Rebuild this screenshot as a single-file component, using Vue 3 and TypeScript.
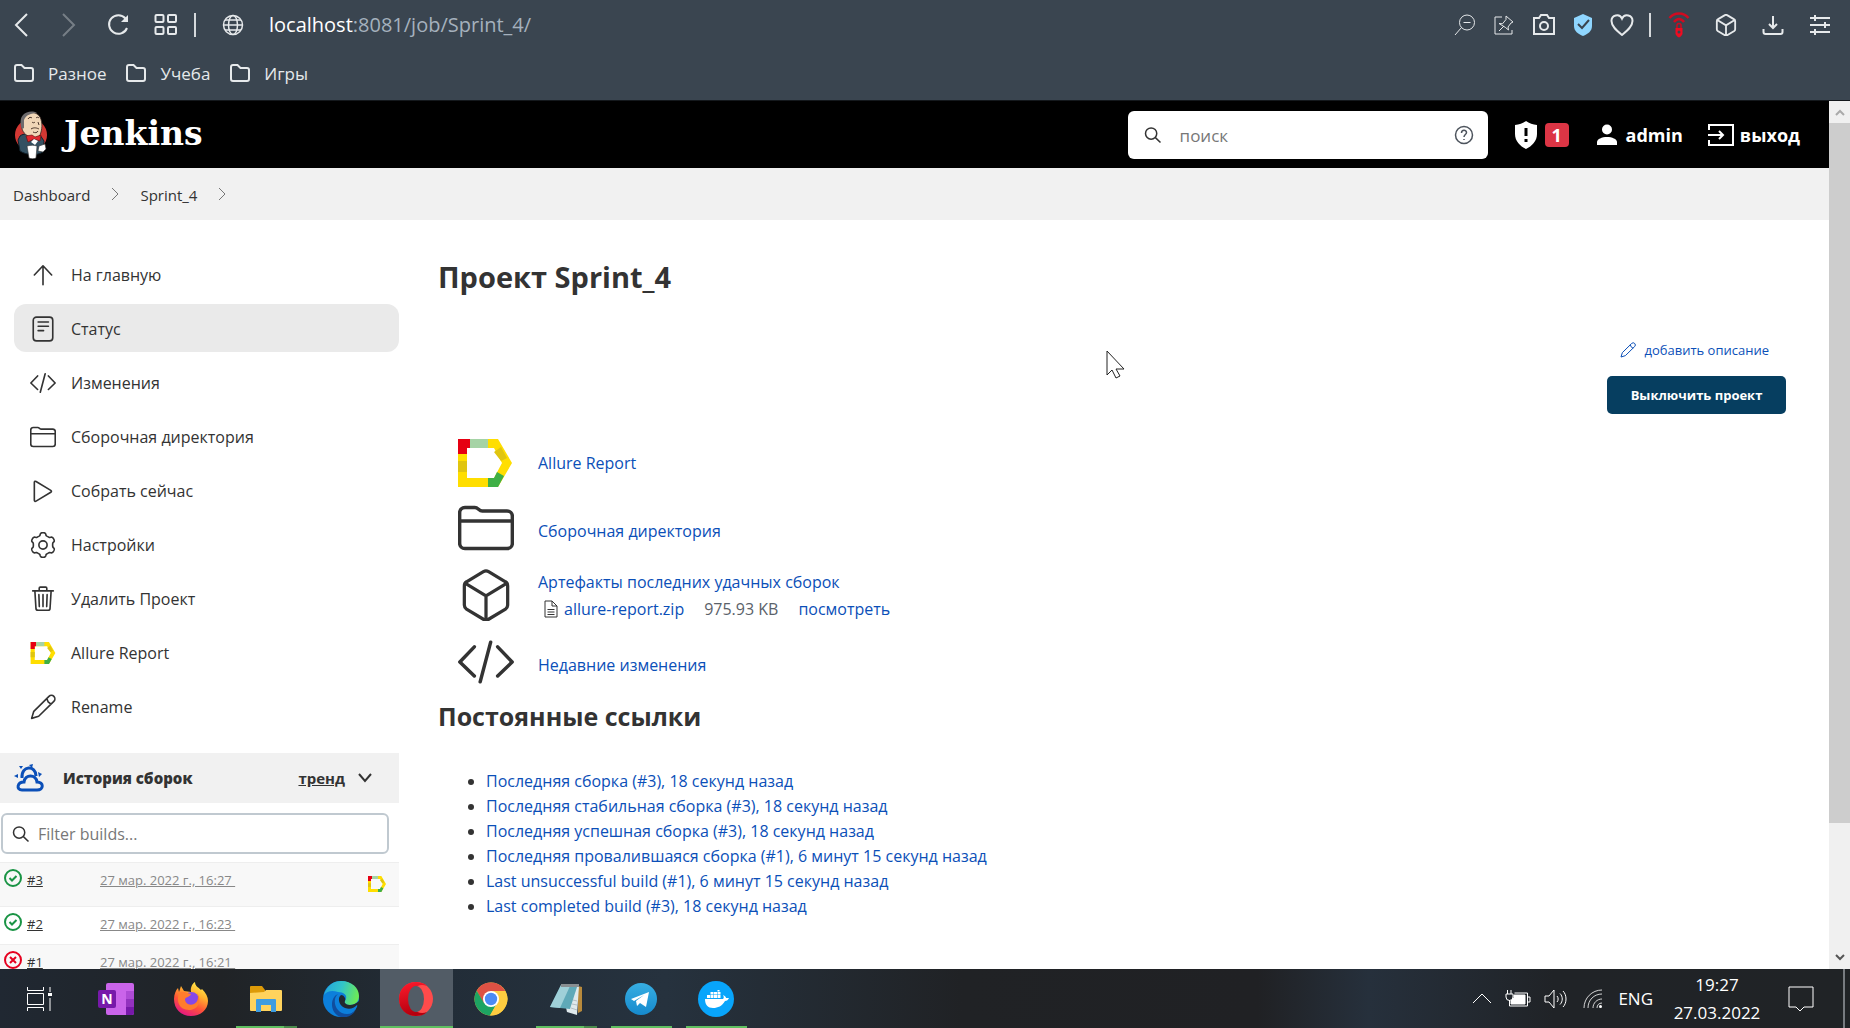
<script setup lang="ts">
import { ref } from 'vue'

interface Task { icon: string; label: string; active?: boolean }
interface Build { id: string; date: string; ok: boolean; report?: boolean }
interface App { name: string; state?: 'open' | 'multi' | 'focus' }

const search = ref('')
const filter = ref('')

// Six-lobed gear outline around (12, 12)
function gearOutline(): string {
  const points: string[] = []
  for (let i = 0; i < 120; i++) {
    const angle = (i / 120) * Math.PI * 2
    const wave = Math.cos(angle * 6)
    const radius = 10.1 + 1.2 * (wave / (0.3 + Math.abs(wave))) * 1.3
    points.push(`${(12 + radius * Math.sin(angle)).toFixed(2)} ${(12 - radius * Math.cos(angle)).toFixed(2)}`)
  }
  return `M${points.join('L')}Z`
}

const strokes: Record<string, string> = {
  up: 'M12 21V4M4 12l8-8.500 8 8.500',
  status: 'M6 1h12a3 3 0 0 1 3 3v16a3 3 0 0 1-3 3H6a3 3 0 0 1-3-3V4a3 3 0 0 1 3-3zM7.500 5.500h9.500M7.500 9.500h9.500M7.500 13.500h5',
  code: 'M7 5.500L.8 12 7 18M17 5.500l6.200 6.500L17 18M14 3.500l-4.500 17',
  folder: 'M.7 5.500A2.300 2.300 0 0 1 3 3.200h4.200c1.500 0 1.700 1.500 3.200 1.500H21A2.300 2.300 0 0 1 23.300 7v11.500a2.300 2.300 0 0 1-2.300 2.300H3a2.300 2.300 0 0 1-2.300-2.300zM.7 9h22.600',
  play: 'M4 4v16.500c0 1 .8 1.300 1.600.8l13.600-8.200c.8-.5.8-1.200 0-1.700L5.600 3.200C4.800 2.700 4 3 4 4z',
  gear: gearOutline() + 'M15.800 12a3.800 3.800 0 1 1-7.600 0 3.800 3.800 0 0 1 7.600 0z',
  trash: 'M2.500 4.500h19M4.500 4.500l1 16.200a1.800 1.800 0 0 0 1.800 1.700h9.400a1.800 1.800 0 0 0 1.800-1.700l1-16.200M8.500 4.500V2a1 1 0 0 1 1-1h5a1 1 0 0 1 1 1v2.500M12 8v11M8.200 8l.4 11M15.800 8l-.4 11',
  pencil: 'M1.500 22.500l2-6.500L17.500 2.200a3.200 3.200 0 0 1 4.500 4.600L8 20.500zM15.500 4.200l1.200 3 1.500 1.300 1.800.3',
  search: 'M17 10a7.500 7.500 0 1 1-15 0 7.500 7.500 0 0 1 15 0zM15.200 15.500L22 22',
  cube: 'M2 7.800c0-.9.3-1.500 1-1.900l7.800-4.700a2.300 2.300 0 0 1 2.400 0L21 5.900c.7.4 1 1 1 1.900v8.800c0 .8-.4 1.500-1 1.900l-7.800 4.700c-.7.4-1.700.4-2.400 0L3 18.500c-.6-.4-1-1.100-1-1.900zM2.500 6.600L12 12.400l9.500-5.800M12 12.400v11'
}

const tasks: Task[] = [
  { icon: 'up', label: 'На главную' },
  { icon: 'status', label: 'Статус', active: true },
  { icon: 'code', label: 'Изменения' },
  { icon: 'folder', label: 'Сборочная директория' },
  { icon: 'play', label: 'Собрать сейчас' },
  { icon: 'gear', label: 'Настройки' },
  { icon: 'trash', label: 'Удалить Проект' },
  { icon: 'allure', label: 'Allure Report' },
  { icon: 'pencil', label: 'Rename' }
]

const builds: Build[] = [
  { id: '#3', date: '27 мар. 2022 г., 16:27', ok: true, report: true },
  { id: '#2', date: '27 мар. 2022 г., 16:23', ok: true },
  { id: '#1', date: '27 мар. 2022 г., 16:21', ok: false }
]

const permalinks: string[] = [
  'Последняя сборка (#3), 18 секунд назад',
  'Последняя стабильная сборка (#3), 18 секунд назад',
  'Последняя успешная сборка (#3), 18 секунд назад',
  'Последняя провалившаяся сборка (#1), 6 минут 15 секунд назад',
  'Last unsuccessful build (#1), 6 минут 15 секунд назад',
  'Last completed build (#3), 18 секунд назад'
]

const bookmarks: string[] = ['Разное', 'Учеба', 'Игры']

const apps: App[] = [
  { name: 'taskview' }, { name: 'onenote' }, { name: 'firefox' },
  { name: 'explorer', state: 'multi' }, { name: 'edge' }, { name: 'opera', state: 'focus' },
  { name: 'chrome' }, { name: 'notepad', state: 'multi' },
  { name: 'telegram', state: 'open' }, { name: 'docker', state: 'open' }
]
</script>

<template>
  <div class="screen">
    <svg class="defs" width="0" height="0" aria-hidden="true">
      <defs>
        <symbol id="allure" viewBox="0 0 54 48">
          <g stroke="none">
            <path fill="#ffde00" d="M0 0h40l14 24-14 24H0V0zm9 9v30h27l8-15-8-15z" fill-rule="evenodd" />
            <path fill="#e60012" d="M0 0h12v9H9v6H0z" />
            <path fill="#a5d3a5" d="M12 0h18v9H12z" />
            <path fill="#e0c510" d="M0 22h9v11H0zM36 13l7-5 6 11-6 3z" />
            <path fill="#3faf46" d="M30 39h6l3-6 7 4-6 11H30z" />
          </g>
        </symbol>
      </defs>
    </svg>

    <div class="browser">
      <div class="toolbar">
        <div class="nav">
          <button class="ib" aria-label="Назад"><svg width="14" height="24" viewBox="0 0 14 24"><path d="M13 1L2 12l11 11" /></svg></button>
          <button class="ib dim" aria-label="Вперёд"><svg width="14" height="24" viewBox="0 0 14 24"><path d="M1 1l11 11L1 23" /></svg></button>
          <button class="ib" aria-label="Обновить"><svg width="22" height="22" viewBox="0 0 22 22"><path d="M18.500 4.500A9.300 9.300 0 1 0 20 14" /><path d="M21 1v7h-7z" fill="#e6e9eb" stroke="none" /></svg></button>
          <button class="ib" aria-label="Вкладки"><svg width="24" height="22" viewBox="0 0 24 22"><rect x="1.500" y="1" width="8" height="7" rx="1" /><rect x="14" y="1" width="8" height="7" rx="1" /><rect x="1.500" y="13" width="8" height="7" rx="1" /><rect x="14" y="13" width="8" height="7" rx="1" /></svg></button>
          <span class="sep"></span>
          <svg class="globe" width="22" height="22" viewBox="0 0 22 22"><circle cx="11" cy="11" r="9.500" /><ellipse cx="11" cy="11" rx="4.500" ry="9.500" /><path d="M1.500 11h19M3 6h16M3 16h16" /></svg>
          <span class="url"><b>localhost</b>:8081/job/Sprint_4/</span>
        </div>
        <div class="tools">
          <svg width="22" height="22" viewBox="0 0 22 22"><circle cx="13" cy="8.500" r="7.500" /><path d="M7.500 13.500L1 21M9.500 8.500h7" /></svg>
          <svg width="22" height="22" viewBox="0 0 22 22"><path d="M9 3H2v17h17v-4M13 2l7 6-2 1-3 4 .5 3-3-2.500L6 9.500l3.500.3L13 5.500zM11 12l-5 5" /></svg>
          <svg width="24" height="22" viewBox="0 0 24 22"><path d="M2 4h5l2-3h6l2 3h5v16H2z" /><circle cx="12" cy="12" r="4" /></svg>
          <svg width="20" height="24" viewBox="0 0 20 24"><path d="M10 1l9 4v8c0 5-4 8-9 10-5-2-9-5-9-10V5z" fill="#8fd6ff" stroke="none" /><path d="M5 11l4 4 7-8" stroke="#3a4550" stroke-width="2" /></svg>
          <svg width="24" height="22" viewBox="0 0 24 22"><path d="M12 21C7 17 1.500 12.500 1.500 7a5.500 5.500 0 0 1 10.500-2.500A5.500 5.500 0 0 1 22.500 7c0 5.500-5.500 10-10.500 14z" /></svg>
          <span class="sep"></span>
          <svg class="vpn" width="22" height="26" viewBox="0 0 22 26"><path d="M1.500 6c5-6 14-6 19 0M6 10c3-4 7-4 10 0" stroke="#d00b20" stroke-width="2.500" /><path d="M9 16v-2.500a2 2 0 0 1 4 0V16" stroke="#d00b20" stroke-width="1.500" /><path d="M7.500 16h7v6c-1 2-2 3-3.500 3.500-1.500-.5-2.500-1.500-3.500-3.500z" fill="#f00b20" stroke="none" /><circle cx="11" cy="20" r="1.500" fill="#3a4550" stroke="none" /></svg>
          <svg class="wide" width="22" height="22" viewBox="0 0 24 24"><path :d="strokes.cube" /></svg>
          <svg class="wide" width="22" height="22" viewBox="0 0 22 22"><path d="M11 2v12M7 10l4 4 4-4M1.500 15v3a2 2 0 0 0 2 2h15a2 2 0 0 0 2-2v-3" /></svg>
          <svg class="wide" width="22" height="22" viewBox="0 0 22 22"><path d="M1 4h20M1 11h20M1 18h20M6 1v6M16 8v6M6 15v6" /></svg>
        </div>
      </div>
      <nav class="bookmarks">
        <a v-for="name in bookmarks" :key="name" href="#">
          <svg width="20" height="18" viewBox="0 0 20 18"><path d="M1 3a2 2 0 0 1 2-2h4.500l3 3H17a2 2 0 0 1 2 2v9a2 2 0 0 1-2 2H3a2 2 0 0 1-2-2z" /></svg>{{ name }}
        </a>
      </nav>
    </div>

    <div class="viewport">
      <div class="page">
        <header class="header">
          <a class="brand" href="#">
            <svg width="34" height="48" viewBox="0 0 34 48">
              <circle cx="17" cy="24" r="16" fill="#d33833" />
              <path d="M6 25c4-3 8-2 12 0l8-1 4 6-1 11c-7 4-17 3-23-1L4 29z" fill="#335061" stroke="#10202a" />
              <path d="M8 7c3-6 14-8 18-1 3 6 2 13 0 18-3 4-8 4-12 1C8 22 6 15 8 7z" fill="#f0d6b7" stroke="#3a2a25" stroke-width=".8" />
              <path d="M9 4c-3 3-3 9-1 14l2-1V9c2-5 7-7 13-7C18-1 12 1 9 4z" fill="#6d6b6d" />
              <path d="M14 8c1-2 3-2 4-1M22 7c1-1 2-1 3 0M18 11c1 1 2 1 3 0M24 11l1 3M17 18c3-2 6-1 8 0M19 21c2 1 4 1 5-1" fill="none" stroke="#49352a" />
              <path d="M18 24l-6 1 2 6 6-3 6 2 1-6-6 2z" fill="#e0282e" stroke="#70110e" stroke-width=".7" />
              <path d="M17 31l3-3 4 2-3 4z" fill="#fff" />
              <path d="M13 35c4-1 7-1 10 0l-1 12c-2 1-5 1-7 0z" fill="#fff" stroke="#333" stroke-width=".6" />
              <path d="M25 35l6-2 1 5-3 3-5-1z" fill="#fff" stroke="#333" stroke-width=".6" />
            </svg>
            <span>Jenkins</span>
          </a>
          <div class="account">
            <label class="search">
              <svg width="18" height="18" viewBox="0 0 24 24"><path :d="strokes.search" /></svg>
              <input v-model="search" type="text" placeholder="поиск" aria-label="поиск" />
              <svg width="20" height="20" viewBox="0 0 20 20"><circle cx="10" cy="10" r="8.500" /><path d="M7.500 8c0-3.500 5-3.500 5-.5C12.500 9.500 10 9.500 10 12M10 14v1" /></svg>
            </label>
            <a class="alerts" href="#">
              <svg width="24" height="28" viewBox="0 0 24 28"><path d="M12 0c3 2.500 7 3.500 11 4v9c0 7-5 12-11 15C6 25 1 20 1 13V4c4-.5 8-1.500 11-4z" fill="#fff" /><path d="M12 7v8M12 18v3" stroke="#000" stroke-width="3" /></svg>
              <span class="badge">1</span>
            </a>
            <a class="user" href="#"><svg width="20" height="22" viewBox="0 0 20 22"><circle cx="10" cy="5.500" r="5" fill="#fff" /><path d="M0 21v-3c0-3 5-5 10-5s10 2 10 5v3z" fill="#fff" /></svg>admin</a>
            <a class="logout" href="#"><svg width="28" height="24" viewBox="0 0 28 24"><path d="M2 7V2h24v20H2v-5M1 12h15M12 8l4 4-4 4" fill="none" stroke="#fff" stroke-width="2" /></svg>выход</a>
          </div>
        </header>

        <nav class="crumbs">
          <a href="#">Dashboard</a>
          <svg width="8" height="14" viewBox="0 0 8 14"><path d="M1 1l6 6-6 6" /></svg>
          <a href="#">Sprint_4</a>
          <svg width="8" height="14" viewBox="0 0 8 14"><path d="M1 1l6 6-6 6" /></svg>
        </nav>

        <div class="body">
          <aside class="side">
            <nav class="tasks">
              <a v-for="task in tasks" :key="task.label" href="#" :class="{ active: task.active }">
                <svg v-if="task.icon === 'allure'" width="26" height="22"><use href="#allure" /></svg>
                <svg v-else width="26" height="26" viewBox="0 0 24 24"><path :d="strokes[task.icon]" /></svg>
                {{ task.label }}
              </a>
            </nav>
            <div class="history">
              <svg class="weather" width="30" height="30" viewBox="0 0 30 30">
                <path d="M8 27h15c7 0 7-8 0-8-1-8-12-8-13 0-7 0-8 8-2 8z" fill="none" stroke="#0b4fb8" stroke-width="3" />
                <path d="M8 15c-1-13 14-13 14-2" fill="none" stroke="#0b4fb8" stroke-width="3" />
                <path d="M0 13l4-2v4zM5 3l4 0-2 3zM15 2l4-1-1 4zM24 9l4 2-3 3z" fill="#0b4fb8" />
              </svg>
              <strong>История сборок</strong>
              <a href="#">тренд</a>
              <svg width="14" height="10" viewBox="0 0 14 10"><path d="M1 1l6 7 6-7" fill="none" stroke="#333" stroke-width="2" /></svg>
            </div>
            <label class="filter">
              <svg width="18" height="18" viewBox="0 0 24 24"><path :d="strokes.search" /></svg>
              <input v-model="filter" type="text" placeholder="Filter builds..." aria-label="Filter builds..." />
            </label>
            <table class="builds">
              <tbody>
                <tr v-for="build in builds" :key="build.id" :class="{ tall: build.report }">
                  <td class="num">
                    <svg width="18" height="18" viewBox="0 0 18 18" :class="build.ok ? 'ok' : 'bad'">
                      <circle cx="9" cy="9" r="8" />
                      <path v-if="build.ok" d="M5.500 9l2.500 2.500L12.500 7" />
                      <path v-else d="M6 6l6 6M12 6l-6 6" />
                    </svg>
                    <a href="#">{{ build.id }}</a>
                  </td>
                  <td class="when"><a href="#">{{ build.date }}&nbsp;</a></td>
                  <td class="report"><a v-if="build.report" href="#" aria-label="Allure Report"><svg width="18" height="16"><use href="#allure" /></svg></a></td>
                </tr>
              </tbody>
            </table>
          </aside>

          <main class="main">
            <h1>Проект Sprint_4</h1>
            <div class="actions">
              <a href="#"><svg width="16" height="18" viewBox="0 0 24 24"><path :d="strokes.pencil" /></svg>добавить описание</a>
              <button type="button">Выключить проект</button>
            </div>
            <div class="links">
              <div class="entry report-entry">
                <svg width="54" height="48"><use href="#allure" /></svg>
                <a href="#">Allure Report</a>
              </div>
              <div class="entry">
                <svg width="56" height="56" viewBox="0 0 24 24"><path :d="strokes.folder" /></svg>
                <a class="label" href="#">Сборочная директория</a>
              </div>
              <div class="entry">
                <svg width="56" height="52" viewBox="0 0 24 24"><path :d="strokes.cube" /></svg>
                <div class="artifacts">
                  <a href="#">Артефакты последних удачных сборок</a>
                  <div class="file">
                    <svg width="14" height="18" viewBox="0 0 14 18"><path d="M1 1h7l5 5v11H1zM8 1v5h5M3.500 9.500h7M3.500 12h7M3.500 14.500h7" /></svg>
                    <a href="#">allure-report.zip</a>
                    <span>975.93 KB</span>
                    <a href="#">посмотреть</a>
                  </div>
                </div>
              </div>
              <div class="entry">
                <svg width="56" height="56" viewBox="0 0 24 24"><path :d="strokes.code" /></svg>
                <a class="label" href="#">Недавние изменения</a>
              </div>
            </div>
            <h2>Постоянные ссылки</h2>
            <ul class="perma">
              <li v-for="item in permalinks" :key="item"><a href="#">{{ item }}</a></li>
            </ul>
          </main>
        </div>
      </div>

      <div class="scrollbar" aria-hidden="true">
        <svg width="10" height="7" viewBox="0 0 10 7"><path d="M1 6l4-4 4 4" stroke="#aaa" /></svg>
        <div class="track"><div class="thumb"></div></div>
        <svg width="10" height="7" viewBox="0 0 10 7"><path d="M1 1l4 4 4-4" stroke="#555" /></svg>
      </div>
    </div>

    <footer class="taskbar">
      <div class="apps">
        <button v-for="app in apps" :key="app.name" :class="app.state" :aria-label="app.name">
          <svg v-if="app.name === 'taskview'" width="26" height="26" viewBox="0 0 26 26"><path d="M1.500 1v3.500h16V1M1.500 7.500h16v11h-16zM1.500 25v-3.500h16V25M24 1v5M24 12v13" fill="none" stroke="#fff" /><path d="M22 7h4v3h-4z" fill="#fff" /></svg>
          <svg v-else-if="app.name === 'onenote'" width="36" height="34" viewBox="0 0 36 34">
            <rect x="8" y="1" width="28" height="32" rx="2" fill="#ca64ea" /><path d="M28 9h8v8h-8z" fill="#ae4bd5" /><path d="M28 17h8v8h-8z" fill="#9332bf" /><path d="M28 25h8v6a2 2 0 0 1-2 2h-6z" fill="#7719aa" /><rect y="8" width="18" height="18" rx="2" fill="#7719aa" />
            <text x="9" y="22" text-anchor="middle" fill="#fff" font-family="Open Sans, sans-serif" font-weight="700" font-size="14">N</text>
          </svg>
          <svg v-else-if="app.name === 'firefox'" width="36" height="36" viewBox="0 0 36 36">
            <defs><linearGradient id="ffx" x1=".8" y1="0" x2=".3" y2="1"><stop offset="0" stop-color="#fff44f" /><stop offset=".35" stop-color="#ffb02e" /><stop offset=".65" stop-color="#ff5536" /><stop offset="1" stop-color="#e31587" /></linearGradient></defs>
            <path d="M18 35C8 35 1 28 1 18c0-5 2-9 4-11l1 4 2-6 3 5 7 1c-1-5 2-9 4-10 0 4 3 5 6 8l1-1c4 4 6 8 6 12 0 9-8 15-17 15z" fill="url(#ffx)" />
            <circle cx="18.500" cy="18.500" r="7.500" fill="#8548e8" /><path d="M6 12c4-3 8 0 12 1-1 3-5 3-6 5 0 4 4 7 9 5 4-2 5-7 3-11 5 7 2 17-8 17S3 20 6 12z" fill="#ff7c2d" />
          </svg>
          <svg v-else-if="app.name === 'explorer'" width="32" height="28" viewBox="0 0 32 28"><path d="M0 2a1 1 0 0 1 1-1h11l3 4v3H0z" fill="#dd9a08" /><path d="M0 8l14-1 2-2h15a1 1 0 0 1 1 1v19a1 1 0 0 1-1 1H1a1 1 0 0 1-1-1z" fill="#ffd35d" /><path d="M6 15a1 1 0 0 1 1-1h18a1 1 0 0 1 1 1v12h-5v-7H11v7H6z" fill="#3e9ce0" /></svg>
          <svg v-else-if="app.name === 'edge'" width="36" height="36" viewBox="0 0 36 36">
            <defs><linearGradient id="edg" x1="0" y1=".2" x2="1" y2=".4"><stop offset="0" stop-color="#24a5dc" /><stop offset=".5" stop-color="#32c5c9" /><stop offset="1" stop-color="#6bea58" /></linearGradient></defs>
            <circle cx="18" cy="18" r="18" fill="#0c7fdb" /><path d="M1 14C4 4 11 0 18 0c11 0 18 7 18 15 0 6-4 9-9 9-4 0-6-2-5-4 4-6-2-9-7-9C9 9 4 10 1 14z" fill="url(#edg)" /><path d="M15 13c-7 6-2 20 9 20 4 0 7-2 9-4-4 6-9 8-15 7-12-4-11-20-3-23z" fill="#104d9e" /><path d="M18 14c-4 3-2 11 4 13 5 2 9 0 12-3 1 1 0 2-1 4l4-1V19c-5 6-13 6-15 3-1-1 1-3 0-5s-2-3-4-3z" fill="#232830" />
          </svg>
          <svg v-else-if="app.name === 'opera'" width="34" height="36" viewBox="0 0 34 36">
            <defs><linearGradient id="opr" x1="0" y1="0" x2=".2" y2="1"><stop offset="0" stop-color="#ff1b2d" /><stop offset="1" stop-color="#b5000e" /></linearGradient></defs>
            <ellipse cx="17" cy="18" rx="17" ry="17" fill="#ff4b4b" /><path d="M17 1C7 1 0 8 0 18s7 17 17 17c4 0 8-1 11-4-5 2-10 1-13-3-4-6-4-14 0-20 3-4 8-5 13-3-3-3-7-4-11-4z" fill="url(#opr)" /><ellipse cx="17" cy="18" rx="8" ry="13" fill="#525c66" />
          </svg>
          <svg v-else-if="app.name === 'chrome'" width="34" height="34" viewBox="0 0 34 34"><circle cx="17" cy="17" r="16.500" fill="#ffcd40" /><path d="M2.700 8.700A16.500 16.500 0 0 1 31.300 9H17l-7 13z" fill="#dd5144" /><path d="M2.700 8.700A16.500 16.500 0 0 0 16 33.500l7-12.500-13 0z" fill="#1da462" /><path d="M17 9h14.300a16.500 16.500 0 0 1-15.300 24.500l7-12z" fill="#ffcd40" /><circle cx="17" cy="17" r="8" fill="#fff" /><circle cx="17" cy="17" r="6.200" fill="#4c8bf5" /></svg>
          <svg v-else-if="app.name === 'notepad'" width="34" height="34" viewBox="0 0 34 34"><path d="M29 4l4 1v24l-4 2z" fill="#b88a3c" /><path d="M12 3l18 1-2 29-10-3z" fill="#dfe9ec" /><path d="M12 3l16 2-7 22-20-2z" fill="#5fa9b8" /><path d="M12 3l9 1-10 22-10-1z" fill="#9fd0d8" /><path d="M12 2h18v3H12z" fill="#888e91" /><path d="M24 18l4 1M23 22l5 1M22 26l6 2" stroke="#b4bfc4" /></svg>
          <svg v-else-if="app.name === 'telegram'" width="32" height="32" viewBox="0 0 32 32"><defs><linearGradient id="tg" x2="0" y2="1"><stop stop-color="#37aee2" /><stop offset="1" stop-color="#168acd" /></linearGradient></defs><circle cx="16" cy="16" r="16" fill="url(#tg)" /><path d="M6 16L24 9 21 24l-6-4-3 3-1-5 8-6-10 6z" fill="#fff" /></svg>
          <svg v-else width="36" height="36" viewBox="0 0 36 36"><circle cx="18" cy="18" r="18" fill="#08a5fb" /><path d="M7 18h18c1-1 1-2 0-4 2 1 3 2 3 3l3 0c-1 2-2 3-4 3-3 5-7 7-12 7-5 0-8-3-8-9z" fill="#fff" /><path d="M9 14h3v3H9zM12.500 14h3v3h-3zM16 14h3v3h-3zM19.500 14h3v3h-3zM12.500 11h3v2.500h-3zM16 11h3v2.500h-3zM19.500 11h3v2.500h-3zM19.500 9h2v1.500h-2z" fill="#fff" /></svg>
        </button>
      </div>
      <div class="tray">
        <svg width="20" height="12" viewBox="0 0 20 12"><path d="M1 10l9-9 9 9" /></svg>
        <svg width="26" height="18" viewBox="0 0 26 18"><path d="M1 4h7v3a3 3 0 0 1-7 0zM2.500 4V0M6 4V0M4.500 10v6h18V3h-13M23 7h2v5h-2" /><path d="M9 5h11v9H6v-3l3-3z" fill="#fff" /></svg>
        <svg width="24" height="20" viewBox="0 0 24 20"><path d="M1 7h4l5-6v18l-5-6H1zM13 7c1.500 1.500 1.500 4.500 0 6M16 4.500c3 3 3 8 0 11M19 2c4 4 4 12 0 16" /></svg>
        <svg width="20" height="20" viewBox="0 0 20 20"><path d="M1 19C1 9 9 1 19 1M5 19C5 11 11 5 19 5M10 19c0-5 4-9 9-9M14 19c0-3 2-5 5-5" opacity=".8" /><circle cx="17.500" cy="17.500" r="1.500" fill="#fff" stroke="none" /></svg>
        <span>ENG</span>
        <div class="clock"><span>19:27</span><span>27.03.2022</span></div>
        <svg class="note" width="26" height="26" viewBox="0 0 26 26"><path d="M1 1h24v20h-9l-4 4-4-4H1z" /></svg>
        <div class="desk"></div>
      </div>
    </footer>

    <svg class="cursor" width="20" height="30" viewBox="0 0 20 30"><path d="M1 1v24l5-5 4 8 4-2-4-7h8z" fill="#fff" stroke="#222" /></svg>
  </div>
</template>

<style>
body { margin: 0; }
</style>

<style scoped>
* { box-sizing: border-box; }
.screen {
  display: flex; flex-direction: column; height: 100vh; overflow: hidden; position: relative;
  font-family: "Open Sans", "Noto Sans", sans-serif; font-size: 16px; color: #333; background: #fff;
}
.defs { position: absolute; }
a { color: inherit; text-decoration: none; }
svg { flex: none; display: block; }
button { font: inherit; border: 0; padding: 0; background: none; color: inherit; }

.browser { flex: none; background: #3a4550; border-bottom: 1px solid #14181c; height: 101px; color: #e6e9eb; }
.browser svg { fill: none; stroke: #e6e9eb; stroke-width: 2; }
.toolbar { display: flex; justify-content: space-between; align-items: center; height: 50px; padding: 0 19px 0 14px; }
.nav { display: flex; align-items: center; }
.ib { margin-right: 34px; }
.ib.dim { opacity: .35; margin-right: 31px; }
.ib:nth-child(3) { margin-right: 25px; }
.ib:nth-child(4) { margin-right: 16px; }
.sep { width: 2px; height: 24px; background: #d5d9dc; }
.browser .globe { margin: 0 25px 0 26px; stroke-width: 1.5; }
.url { font-size: 20px; line-height: 28px; color: #a5b1bd; }
.url b { font-weight: 400; color: #fff; }
.tools { display: flex; align-items: center; gap: 17px; }
.tools svg { stroke-width: 1; }
.tools .sep { margin-left: -2px; }
.tools .wide { margin-left: 8px; stroke-width: 2; }
.tools svg:nth-child(3), .tools svg:nth-child(5) { stroke-width: 2; }
.bookmarks { display: flex; gap: 20px; padding-left: 14px; height: 46px; align-items: center; font-size: 17px; }
.bookmarks a { display: flex; align-items: center; gap: 14px; }

.viewport { flex: 1; min-height: 0; display: flex; }
.page { flex: 1; min-width: 0; overflow: hidden; }
.header { display: flex; justify-content: space-between; align-items: center; height: 67px; padding: 0 29px 0 14px; background: #000; color: #fff; }
.brand { display: flex; align-items: center; gap: 16px; font: 700 33px/40px "DejaVu Serif", serif; }
.brand span { padding-bottom: 2px; }
.account { display: flex; align-items: center; font-weight: 700; font-size: 18px; }
.search { display: flex; align-items: center; width: 360px; height: 48px; padding: 0 14px 0 16px; gap: 18px; background: #fff; border-radius: 6px; margin-right: 26px; }
.search svg, .filter svg { fill: none; stroke: #333; stroke-width: 2; }
.search svg:last-child { stroke: #4d545d; stroke-width: 1.5; }
input { flex: 1; min-width: 0; border: 0; outline: 0; padding: 0; background: none; font: 400 16px/24px "Open Sans", sans-serif; color: #333; }
input::placeholder { color: #777; opacity: 1; }
.search input { font-size: 17px; padding-top: 2px; }
.alerts { display: flex; align-items: center; gap: 7px; margin-right: 28px; }
.badge { width: 24px; height: 24px; border-radius: 4px; background: #dc3545; line-height: 24px; text-align: center; }
.user { display: flex; align-items: center; gap: 9px; margin-right: 24px; }
.logout { display: flex; align-items: center; gap: 5px; }

.crumbs { display: flex; align-items: center; height: 52px; padding: 0 13px; gap: 21px; background: #f1f1f1; font-size: 15px; font-weight: 500; }
.crumbs a { padding-top: 2px; }
.crumbs svg { fill: none; stroke: #777; }

.body { display: flex; }
.side { flex: none; width: 399px; padding-top: 30px; }
.tasks { display: flex; flex-direction: column; gap: 6px; padding-left: 14px; }
.tasks a { display: flex; align-items: center; gap: 15px; height: 48px; padding: 1px 0 0 16px; border-radius: 12px; font-weight: 500; }
.tasks svg { fill: none; stroke: #333; stroke-width: 1.5; stroke-linecap: round; stroke-linejoin: round; }
.tasks .active { background: #eaeaea; }
.history { display: flex; align-items: center; height: 50px; margin-top: 23px; padding: 0 27px 0 14px; background: #f1f1f1; font-weight: 700; font-size: 15px; }
.history strong { margin-left: 19px; flex: 1; }
.history a { text-decoration: underline; margin-right: 13px; }
.filter { display: flex; align-items: center; gap: 8px; height: 41px; margin: 10px 10px 8px 1px; padding: 0 9px; border: 2px solid #c0c9d0; border-radius: 6px; }
.builds { width: 100%; border-collapse: collapse; font-size: 13px; }
.builds tr { height: 38px; border-top: 1px solid #eee; }
.builds tr.tall { height: 44px; }
.builds tr:nth-child(odd) { background: #f8f8f8; }
.builds td { vertical-align: top; padding: 6px 0 0; line-height: 22px; }
.builds a { text-decoration: underline; }
.num { width: 100px; }
.num svg { display: inline-block; vertical-align: top; margin: 0 5px 0 4px; fill: none; stroke-width: 2; }
.ok { stroke: #1a9445; }
.bad { stroke: #e6001f; }
.when { color: #888; }
.builds .report { width: 31px; padding-top: 13px; }

.main { flex: 1; min-width: 0; padding: 38px 43px 0 39px; }
h1 { margin: 0; font-size: 29px; line-height: 38px; }
.actions { display: flex; flex-direction: column; align-items: flex-end; gap: 16px; margin: 44px 0 18px; font-size: 13px; }
.actions a { display: flex; align-items: center; gap: 8px; margin-right: 17px; height: 20px; color: #0b4fb8; font-weight: 500; }
.actions svg { fill: none; stroke: #0b4fb8; stroke-width: 1.5; }
.actions button { width: 179px; height: 38px; border-radius: 5px; background: #063e60; color: #fff; font-weight: 700; }
.links { padding-left: 20px; }
.links a, .perma a { color: #0b4fb8; font-weight: 500; }
.entry { display: flex; align-items: center; gap: 24px; height: 67px; }
.entry.report-entry { height: 62px; gap: 26px; }
.entry > svg { fill: none; stroke: #333; stroke-width: 1.5; stroke-linecap: round; stroke-linejoin: round; }
.label { padding-top: 6px; }
.artifacts { line-height: 27px; padding-top: 2px; }
.file { display: flex; align-items: center; }
.file svg { fill: none; stroke: #333; margin: 0 6px; }
.file span { color: #5b626a; margin: 0 20px; }
h2 { margin: 4px 0 36px; font-size: 25px; line-height: 34px; }
.perma { margin: 0; padding-left: 48px; line-height: 25px; }

.scrollbar { flex: none; width: 21px; display: flex; flex-direction: column; align-items: center; background: #f0f0f0; padding: 8px 0; gap: 7px; }
.scrollbar svg { fill: none; stroke-width: 2; }
.track { flex: 1; width: 100%; }
.thumb { height: 85%; background: #cdcdcd; }

.taskbar { flex: none; height: 59px; display: flex; justify-content: space-between; color: #fff; background: linear-gradient(90deg, #202832, #202326 12%, #222d38 24%, #26323e 36%, #202225 52%, #202124 68%, #26303c 74%, #202327 84%, #202326); }
.apps { display: flex; gap: 2px; padding-left: 5px; }
.apps button { width: 73px; padding-right: 2px; display: flex; align-items: center; justify-content: center; position: relative; }
.apps button:first-child { padding-right: 5px; }
.apps .focus { background: #525c66; }
.apps .open::after, .apps .multi::after, .apps .focus::after { content: ""; position: absolute; bottom: 0; left: 6px; right: 6px; height: 2px; background: #5fbf60; }
.apps .focus::after { left: 0; right: 0; }
.apps .multi::after { background: linear-gradient(90deg, #5fbf60 78%, #4a8a4c 78%); }
.tray { display: flex; align-items: center; font-size: 17px; }
.tray svg { fill: none; stroke: #fff; margin-right: 13px; }
.tray svg:nth-child(4) { margin: 0 15px 0 2px; }
.clock { display: flex; flex-direction: column; align-items: center; width: 90px; margin: 0 26px 0 19px; line-height: 28px; }
.tray .note { margin-right: 29px; }
.desk { width: 7px; height: 100%; border-left: 2px solid #777b80; }
.cursor { position: absolute; left: 1106px; top: 350px; }
</style>
